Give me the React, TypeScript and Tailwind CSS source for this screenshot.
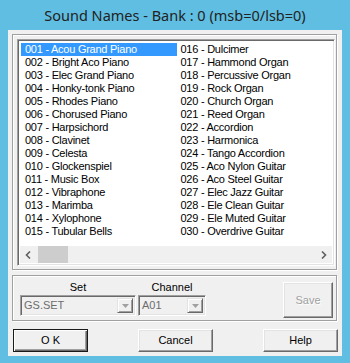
import React from "react";

const col1 = [
  "001 - Acou Grand Piano",
  "002 - Bright Aco Piano",
  "003 - Elec Grand Piano",
  "004 - Honky-tonk Piano",
  "005 - Rhodes Piano",
  "006 - Chorused Piano",
  "007 - Harpsichord",
  "008 - Clavinet",
  "009 - Celesta",
  "010 - Glockenspiel",
  "011 - Music Box",
  "012 - Vibraphone",
  "013 - Marimba",
  "014 - Xylophone",
  "015 - Tubular Bells",
];
const col2 = [
  "016 - Dulcimer",
  "017 - Hammond Organ",
  "018 - Percussive Organ",
  "019 - Rock Organ",
  "020 - Church Organ",
  "021 - Reed Organ",
  "022 - Accordion",
  "023 - Harmonica",
  "024 - Tango Accordion",
  "025 - Aco Nylon Guitar",
  "026 - Aco Steel Guitar",
  "027 - Elec Jazz Guitar",
  "028 - Ele Clean Guitar",
  "029 - Ele Muted Guitar",
  "030 - Overdrive Guitar",
];

const ui = { fontFamily: '"Liberation Sans", Arial, sans-serif' };

function Combo({ w, text }: { w: string; text: string }) {
  return (
    <div
      className={`${w} h-[21px] flex items-stretch border border-t-[#a0a0a0] border-l-[#a0a0a0] border-b-white border-r-white shadow-[inset_1px_1px_0_#696969,inset_-1px_-1px_0_#e3e3e3] p-[2px]`}
    >
      <div className="flex-1 flex items-center pl-[1px] text-[11px] text-[#6d6d6d]">{text}</div>
      <div className="w-[16px] flex items-center justify-center bg-[#f0f0f0] border border-t-[#e3e3e3] border-l-[#e3e3e3] border-b-[#696969] border-r-[#696969] shadow-[inset_1px_1px_0_#fff,inset_-1px_-1px_0_#a0a0a0]">
        <svg width="7" height="4" viewBox="0 0 7 4">
          <path d="M0 0h7L3.5 4z" fill="#a0a0a0" />
        </svg>
      </div>
    </div>
  );
}

function Btn({ children, def }: { children: React.ReactNode; def?: boolean }) {
  return (
    <div
      className={
        def
          ? "w-[75px] h-[23px] flex items-center justify-center border border-[#1a1a1a] shadow-[inset_1px_1px_0_#fff,inset_-1px_-1px_0_#696969,inset_-2px_-2px_0_#a0a0a0] text-[11px] text-black"
          : "w-[75px] h-[23px] flex items-center justify-center border border-t-white border-l-white border-b-[#696969] border-r-[#696969] shadow-[inset_-1px_-1px_0_#a0a0a0,inset_1px_1px_0_#e3e3e3] text-[11px] text-black"
      }
    >
      {children}
    </div>
  );
}

export default function App() {
  return (
    <div className="w-[350px] h-[363px] bg-[#5fbee1] flex flex-col" style={ui}>
      <div
        className="h-[30px] flex items-center justify-center text-[14.5px] text-[#222] pt-[1px]"
        style={{ fontFamily: '"Noto Sans", "Open Sans", sans-serif' }}
      >
        Sound Names - Bank : 0 (msb=0/lsb=0)
      </div>
      <div className="ml-[8px] w-[334px] h-[326px] bg-[#f0f0f0] flex flex-col pl-[4px] pt-[4px]">
        {/* list group */}
        <div className="w-[325px] h-[236px] border border-[#a0a0a0] shadow-[inset_1px_1px_0_#fff,1px_1px_0_#fff] p-[4px]">
          <div className="w-[318px] h-[227px] bg-white border border-t-[#a0a0a0] border-l-[#a0a0a0] border-b-white border-r-white shadow-[inset_1px_1px_0_#696969,inset_-1px_-1px_0_#e3e3e3] p-[2px] flex flex-col">
            <div className="flex-1 flex pl-[1px] pt-[1px]">
              {[col1, col2].map((col, ci) => (
                <div key={ci} className="w-[158px] flex flex-col">
                  {col.map((t, i) => (
                    <div
                      key={t}
                      className={
                        ci === 0 && i === 0
                          ? "h-[13px] leading-[13px] pl-[4px] text-[11px] tracking-[-0.25px] bg-[#3399ff] text-white whitespace-nowrap"
                          : "h-[13px] leading-[13px] pl-[4px] text-[11px] tracking-[-0.25px] text-black whitespace-nowrap"
                      }
                    >
                      {t}
                    </div>
                  ))}
                </div>
              ))}
            </div>
            <div className="h-[17px] bg-[#f0f0f0] flex items-stretch">
              <div className="w-[17px] flex items-center justify-center">
                <svg width="7" height="8" viewBox="0 0 7 8">
                  <path d="M5 0.5L1.5 4L5 7.5" stroke="#606060" strokeWidth="1.6" fill="none" />
                </svg>
              </div>
              <div className="w-[30px] bg-[#cdcdcd] ml-[1px]" />
              <div className="flex-1" />
              <div className="w-[17px] flex items-center justify-center">
                <svg width="7" height="8" viewBox="0 0 7 8">
                  <path d="M2 0.5L5.5 4L2 7.5" stroke="#606060" strokeWidth="1.6" fill="none" />
                </svg>
              </div>
            </div>
          </div>
        </div>
        {/* set group */}
        <div className="mt-[5px] w-[325px] h-[46px] border border-[#a0a0a0] shadow-[inset_1px_1px_0_#fff,1px_1px_0_#fff] flex pl-[7px]">
          <div className="flex flex-col items-center pt-[4px]">
            <div className="h-[15px] text-[11px] leading-[14px] text-black">Set</div>
            <Combo w="w-[116px]" text="GS.SET" />
          </div>
          <div className="flex flex-col items-center pt-[4px] ml-[2px]">
            <div className="h-[15px] text-[11px] leading-[14px] text-black">Channel</div>
            <Combo w="w-[68px]" text="A01" />
          </div>
          <div className="ml-[77px] mt-[6px] w-[50px] h-[36px] flex items-center justify-center border border-t-white border-l-white border-b-[#696969] border-r-[#696969] shadow-[inset_-1px_-1px_0_#a0a0a0,inset_1px_1px_0_#e3e3e3] text-[11px] text-[#a0a0a0] [text-shadow:1px_1px_0_#fff]">
            Save
          </div>
        </div>
        {/* buttons */}
        <div className="mt-[8px] flex pl-[1px] gap-[50px]">
          <Btn def>O K</Btn>
          <Btn>Cancel</Btn>
          <Btn>Help</Btn>
        </div>
      </div>
    </div>
  );
}
